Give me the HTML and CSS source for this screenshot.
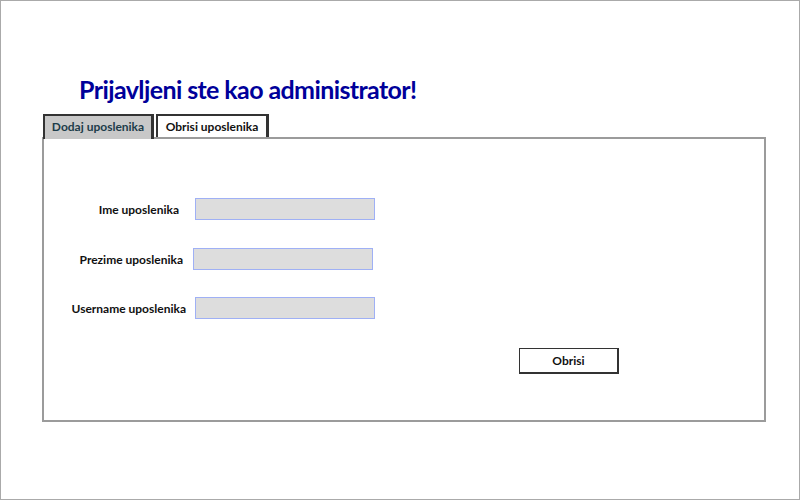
FILE: index.html
```html
<!DOCTYPE html>
<html>
<head>
<meta charset="utf-8">
<link rel="stylesheet" href="styles.css">
</head>
<body>
<div class="frame">
  <h1 class="title">Prijavljeni ste kao administrator!</h1>
  <div class="tabs">
    <div class="tab tab-active">Dodaj uposlenika</div>
    <div class="tab tab-plain">Obrisi uposlenika</div>
  </div>
  <div class="panel">
    <div class="form">
      <div class="row row-ime">
        <label class="label">Ime uposlenika</label>
        <div class="input"></div>
      </div>
      <div class="row row-prezime">
        <label class="label">Prezime uposlenika</label>
        <div class="input"></div>
      </div>
      <div class="row row-user">
        <label class="label">Username uposlenika</label>
        <div class="input"></div>
      </div>
    </div>
    <div class="actions">
      <button class="btn">Obrisi</button>
    </div>
  </div>
</div>
</body>
</html>
```

FILE: styles.css
```css
* { box-sizing: border-box; }
html, body { margin: 0; padding: 0; background: #fff; }
body { font-family: "Lato", "Open Sans", sans-serif; }

.frame {
  width: 800px;
  height: 500px;
  border: 1px solid #aaaaaa;
  padding-top: 68px;
}

.title {
  margin: 0 0 0 78px;
  height: 45px;
  font-size: 25px;
  font-weight: 700;
  color: #00009a;
  line-height: 40px;
  letter-spacing: -0.6px;
  white-space: nowrap;
}

.tabs {
  display: flex;
  gap: 2px;
  margin-left: 42px;
  height: 23px;
  align-items: flex-end;
  position: relative;
  z-index: 1;
}

.tab {
  height: 23px;
  border: 2px solid #333;
  border-right-width: 3px;
  border-bottom: none;
  background: #fff;
  font-size: 12px;
  font-weight: 700;
  color: #111;
  padding: 0;
  text-align: center;
  white-space: nowrap;
  line-height: 21px;
}

.tab-active {
  height: 25px;
  margin-bottom: -2px;
  background: #c8c8c8;
  color: #1d3c4a;
  width: 111px;
}

.tab-plain { width: 113px; }

.panel {
  margin-left: 41px;
  width: 724px;
  height: 285px;
  border: 2px solid #9b9b9b;
  padding-top: 59px;
}

.form {
  display: flex;
  flex-direction: column;
  gap: 28px;
}

.row {
  display: flex;
  align-items: center;
  height: 22px;
}

.label {
  text-align: right;
  font-size: 12px;
  font-weight: 700;
  color: #111;
  white-space: nowrap;
}

.input {
  width: 180px;
  height: 22px;
  background: #dddddd;
  border: 1px solid #9fb0f5;
}

.row-ime .label { width: 135px; }
.row-ime .input { margin-left: 16px; }
.row-prezime .label { width: 139px; }
.row-prezime .input { margin-left: 10px; }
.row-user { margin-top: -1px; }
.row-user .label { width: 142px; }
.row-user .input { margin-left: 9px; }

.actions {
  display: flex;
  padding-left: 475px;
  margin-top: 29px;
}

.btn {
  width: 100px;
  height: 26px;
  background: #fff;
  border: 1px solid #333;
  border-right-width: 2px;
  border-bottom-width: 2px;
  font-family: "Lato", sans-serif;
  font-size: 12px;
  font-weight: 700;
  color: #111;
  padding: 0;
}
```
